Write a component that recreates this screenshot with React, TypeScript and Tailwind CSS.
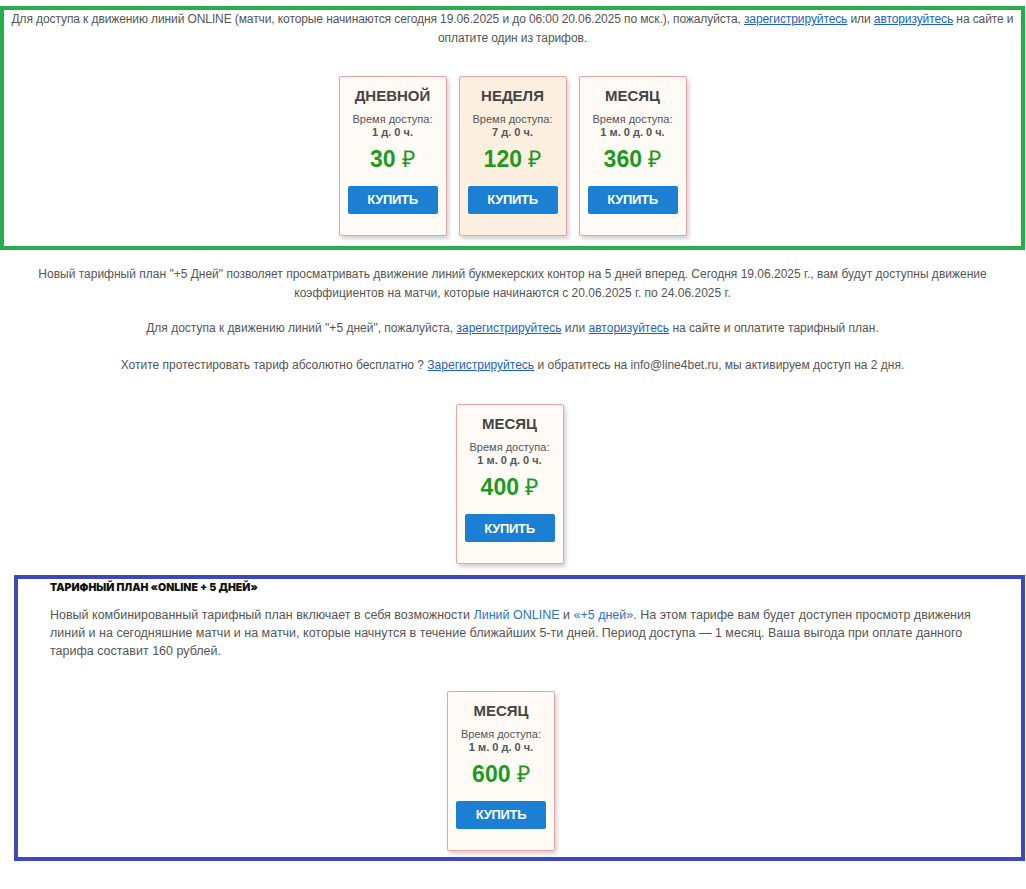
import React from 'react';

interface TariffCardProps {
  title: string;
  time: string;
  price: number;
  highlight?: boolean;
}

const TariffCard: React.FC<TariffCardProps> = ({ title, time, price, highlight }) => (
  <div
    className={`flex flex-col items-center w-[108px] h-[160px] border border-[#eaa3a3] rounded-[2px] shadow-[2px_3px_4px_rgba(0,0,0,0.18)] ${
      highlight ? 'bg-[#fdefe0]' : 'bg-[#fefaf6]'
    }`}
  >
    <div className="mt-[10px] text-[15px] leading-[18px] font-bold text-[#454545]">{title}</div>
    <div className="mt-[8px] text-[11px] leading-[13px] text-[#555]">Время доступа:</div>
    <div className="text-[11px] leading-[13px] font-bold text-[#555]">{time}</div>
    <div className="mt-[6px] text-[23px] leading-[28px] font-bold text-[#1d9a1d]">
      {price} <span className="font-normal">₽</span>
    </div>
    <button className="mt-[13px] w-[90px] h-[28px] bg-[#1b7fd3] rounded-[2px] text-white text-[13px] font-bold tracking-[-0.3px]">
      КУПИТЬ
    </button>
  </div>
);

const Link: React.FC<{ children: React.ReactNode }> = ({ children }) => (
  <a href="#" className="text-[#1a62c7] underline">
    {children}
  </a>
);

export default function App(): JSX.Element {
  return (
    <div className="w-[1026px] bg-white pr-[1px] pb-[27px] font-['Liberation_Sans',Arial,sans-serif] text-[#555]">
      <div className="mt-[6px] h-[244px] border-4 border-[#28ad4c]">
        <p className="text-center text-[12px] leading-[19px] tracking-[-0.1px]">
          Для доступа к движению линий ONLINE (матчи, которые начинаются сегодня 19.06.2025 и до 06:00 20.06.2025 по мск.), пожалуйста,{' '}
          <Link>зарегистрируйтесь</Link> или <Link>авторизуйтесь</Link> на сайте и оплатите один из тарифов.
        </p>
        <div className="mt-[28px] flex justify-center gap-[12px]">
          <TariffCard title="ДНЕВНОЙ" time="1 д. 0 ч." price={30} />
          <TariffCard title="НЕДЕЛЯ" time="7 д. 0 ч." price={120} highlight />
          <TariffCard title="МЕСЯЦ" time="1 м. 0 д. 0 ч." price={360} />
        </div>
      </div>

      <div className="pt-[15px] text-center text-[12px] leading-[19px]">
        <p className="px-[20px]">
          Новый тарифный план "+5 Дней" позволяет просматривать движение линий букмекерских контор на 5 дней вперед. Сегодня 19.06.2025 г., вам будут доступны движение коэффициентов на матчи, которые начинаются с 20.06.2025 г. по 24.06.2025 г.
        </p>
        <p className="mt-[16px]">
          Для доступа к движению линий "+5 дней", пожалуйста, <Link>зарегистрируйтесь</Link> или <Link>авторизуйтесь</Link> на сайте и оплатите тарифный план.
        </p>
        <p className="mt-[18px]">
          Хотите протестировать тариф абсолютно бесплатно ? <Link>Зарегистрируйтесь</Link> и обратитесь на info@line4bet.ru, мы активируем доступ на 2 дня.
        </p>
        <div className="mt-[29px] flex justify-center pr-[6px]">
          <TariffCard title="МЕСЯЦ" time="1 м. 0 д. 0 ч." price={400} />
        </div>
      </div>

      <div className="mt-[11px] ml-[14px] h-[286px] border-4 border-[#3d47c6] px-[32px] pt-[3px]">
        <h3 className="font-['Inter',sans-serif] font-black text-[10.5px] leading-[12px] text-[#111]">
          ТАРИФНЫЙ ПЛАН «ONLINE + 5 ДНЕЙ»
        </h3>
        <p className="mt-[12px] text-[12.5px] leading-[18px]">
          Новый комбинированный тарифный план включает в себя возможности{' '}
          <a href="#" className="text-[#2b6fd1]">Линий ONLINE</a> и{' '}
          <a href="#" className="text-[#2b6fd1]">«+5 дней»</a>. На этом тарифе вам будет доступен просмотр движения линий и на сегодняшние матчи и на матчи, которые начнутся в течение ближайших 5-ти дней. Период доступа — 1 месяц. Ваша выгода при оплате данного тарифа составит 160 рублей.
        </p>
        <div className="mt-[31px] flex justify-center pr-[37px]">
          <TariffCard title="МЕСЯЦ" time="1 м. 0 д. 0 ч." price={600} />
        </div>
      </div>
    </div>
  );
}
